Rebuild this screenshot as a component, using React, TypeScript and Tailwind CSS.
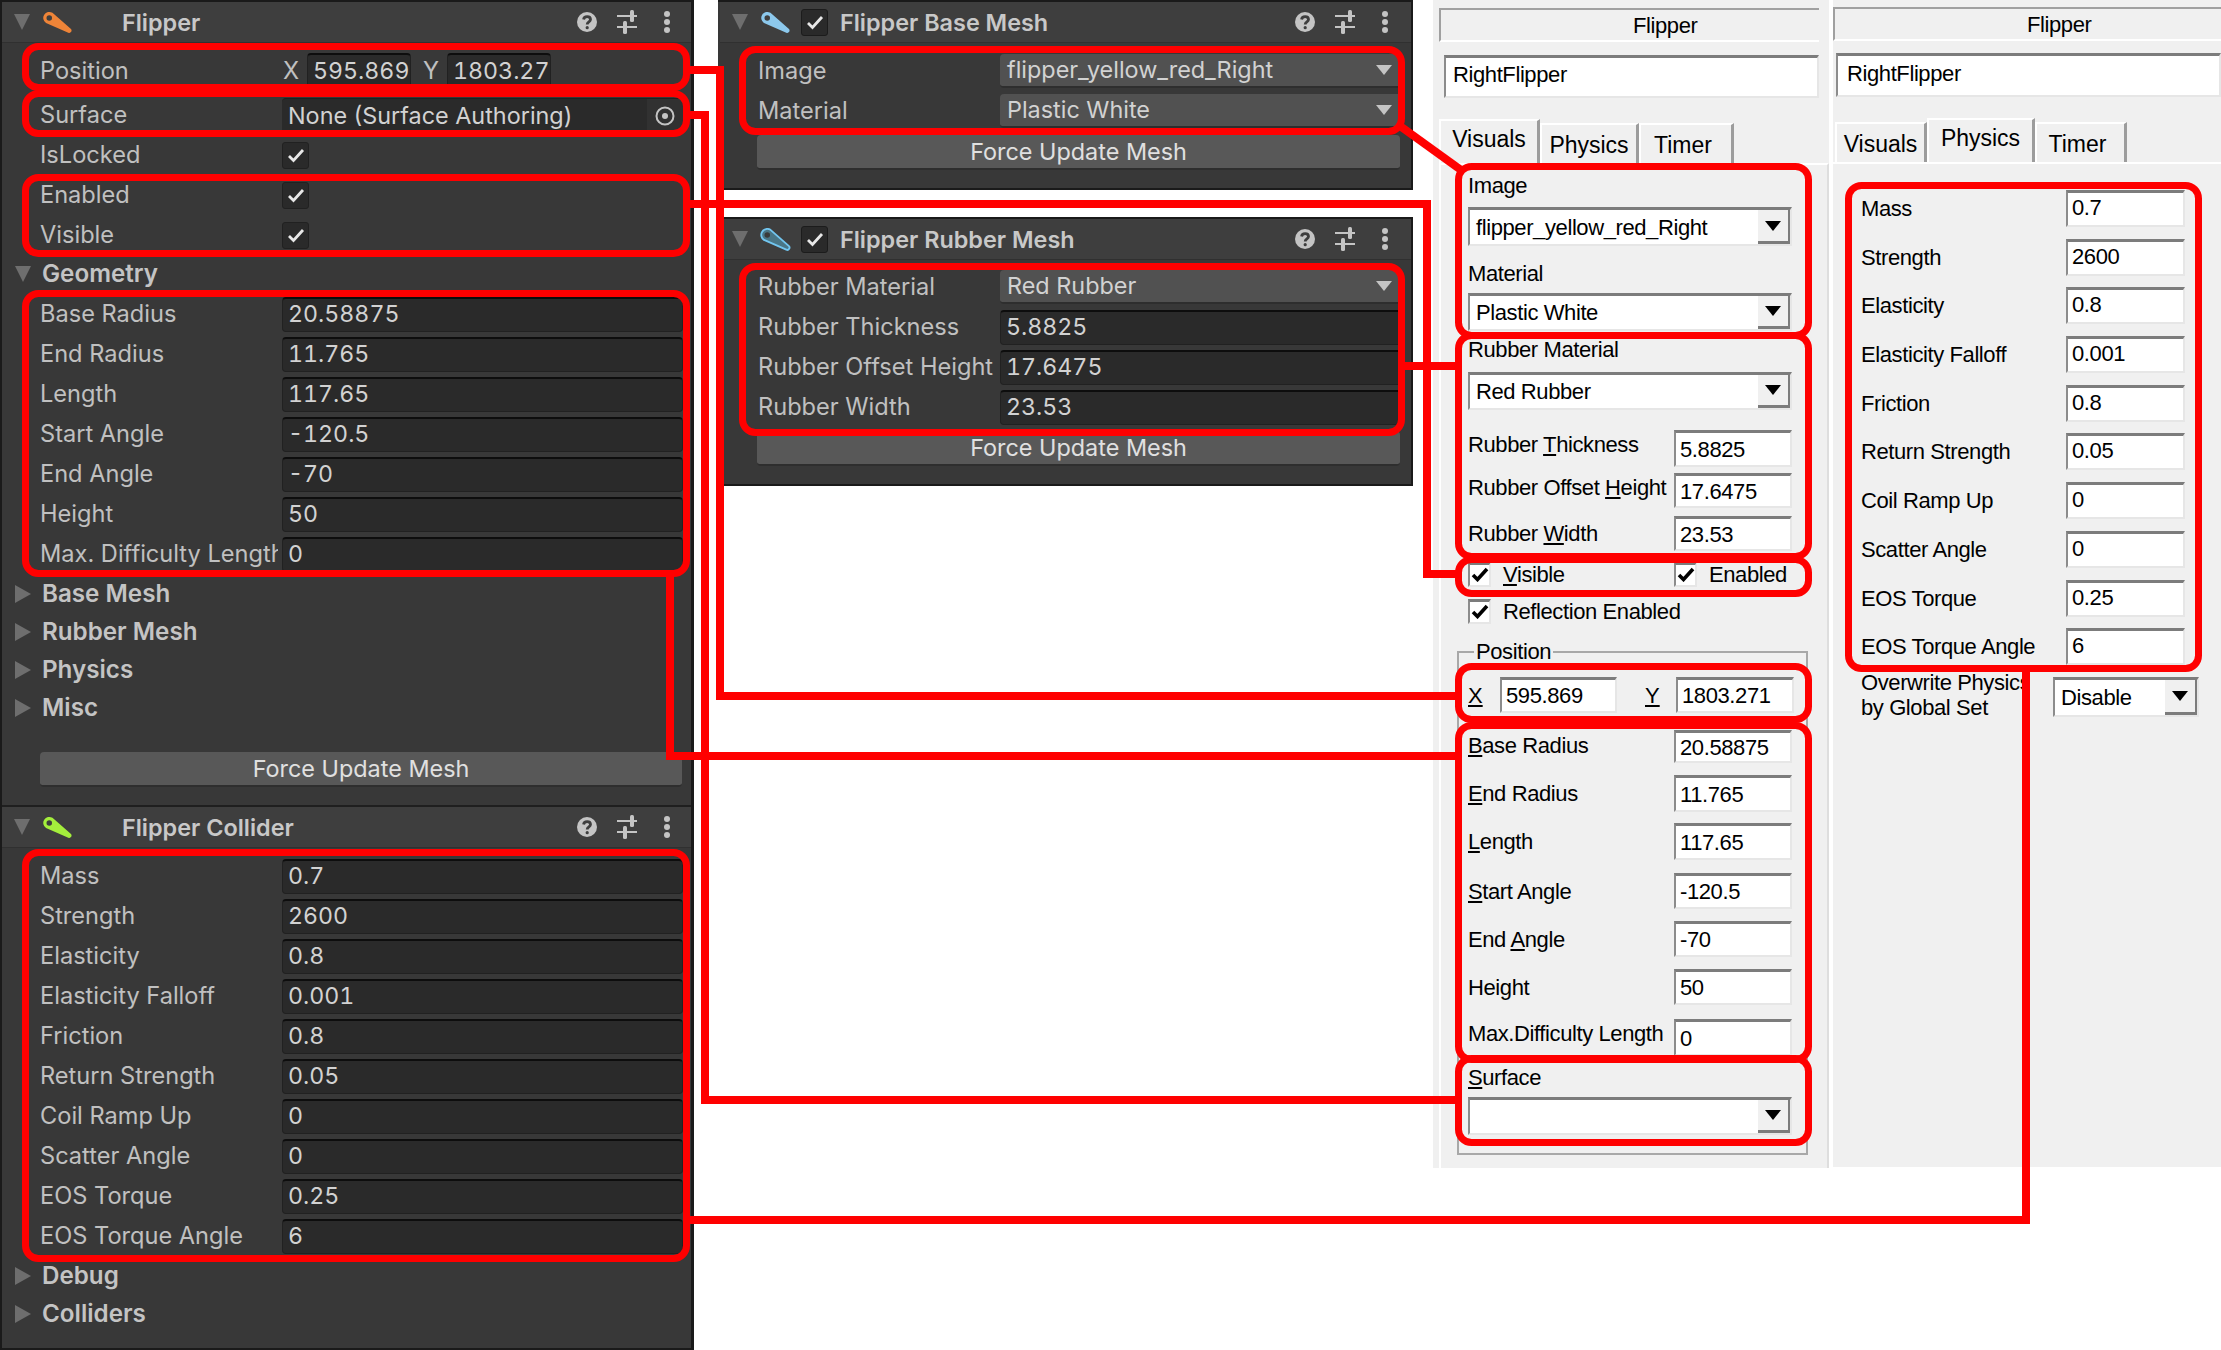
import React from 'react'

const RED_BOXES = [
  // unity inspector
  [22, 43, 690, 91], [22, 90, 690, 137], [22, 174, 690, 257], [22, 290, 690, 577], [22, 849, 690, 1262],
  [739, 46, 1405, 135], [739, 263, 1405, 436],
  // vpx editor
  [1455, 163, 1812, 339], [1455, 332, 1812, 560], [1455, 556, 1812, 597], [1455, 663, 1812, 723],
  [1455, 722, 1812, 1063], [1455, 1055, 1812, 1146], [1845, 182, 2202, 672],
]

const RED_LINES = [
  '690,70 720,70 720,696 1458,696',
  '690,115 705,115 705,1100 1458,1100',
  '690,204 1427,204 1427,574 1458,574',
  '670,577 670,756 1458,756',
  '690,1220 2026,1220 2026,670',
  '1405,366 1458,366',
  '1400,126 1461,170',
]

function Annotations() {
  return (
    <svg className="absolute inset-0 pointer-events-none" width={2221} height={1350} fill="none" stroke="#ff0000" strokeWidth={7}>
      {RED_LINES.map(p => <polyline key={p} points={p} strokeWidth={8} />)}
      {RED_BOXES.map(([x1, y1, x2, y2]) => (
        <rect key={`${x1}-${y1}`} x={x1 + 3.5} y={y1 + 3.5} width={x2 - x1 - 7} height={y2 - y1 - 7} rx={13} />
      ))}
    </svg>
  )
}

function FlipperIcon({ fill, stroke }: { fill: string; stroke?: string }) {
  return (
    <svg width={32} height={23} viewBox="-1 -1 34 25" className="shrink-0">
      <path
        d="M10 1 L29.8 18.4 A2.5 2.5 0 0 1 27.2 22.6 L3 12 A6.5 6.5 0 1 1 10 1 Z"
        fill={fill}
        stroke={stroke ?? 'none'}
        strokeWidth={stroke ? 2 : 0}
      />
      <circle cx={6.5} cy={6.5} r={3} fill={stroke ? '#3a3a3a' : '#3e3e3e'} />
    </svg>
  )
}

function HeaderIcons() {
  return (
    <div className="flex items-center">
      <svg width={20} height={20} viewBox="0 0 20 20">
        <circle cx={10} cy={10} r={10} fill="#c4c4c4" />
        <path d="M6.6 7.5 C7 3.6 13.5 3.6 13.5 7.6 C13.5 10 10.2 10 10.2 12.6" fill="none" stroke="#3e3e3e" strokeWidth={2.8} />
        <circle cx={10.2} cy={15.7} r={1.6} fill="#3e3e3e" />
      </svg>
      <svg width={20} height={24} viewBox="0 0 20 24" className="ml-[20px]" fill="#c4c4c4">
        <rect x={0} y={5} width={20} height={2} />
        <rect x={13} y={0} width={4} height={12} rx={1.5} />
        <rect x={0} y={16} width={20} height={2} />
        <rect x={6} y={11} width={4} height={13} rx={1.5} />
      </svg>
      <div className="ml-[27px] flex flex-col gap-[2px]">
        <span className="block w-[6px] h-[6px] rounded-full bg-[#c4c4c4]" />
        <span className="block w-[6px] h-[6px] rounded-full bg-[#c4c4c4]" />
        <span className="block w-[6px] h-[6px] rounded-full bg-[#c4c4c4]" />
      </div>
    </div>
  )
}

function Check({ className, heavy }: { className?: string; heavy?: boolean }) {
  return (
    <svg width={18} height={15} viewBox="0 0 18 15" className={className} fill="none" stroke="currentColor" strokeWidth={heavy ? 3.6 : 2.8}>
      <path d="M2 8 L6.5 12.5 L16 2" />
    </svg>
  )
}

function ComponentHeader({ title, icon, toggle }: { title: string; icon: React.ReactNode; toggle?: boolean }) {
  return (
    <div className="flex items-center h-[41px] pl-[12px] bg-[#3e3e3e] border-b border-[#303030]">
      <span className="w-0 h-0 border-x-[8px] border-x-transparent border-t-[16px] border-t-[#6e6e6e]" />
      <div className="ml-[12px] w-[31px] flex items-center">{icon}</div>
      <div className="ml-[10px] w-[27px]">
        {toggle && (
          <div className="w-[27px] h-[27px] rounded-[3px] bg-[#2a2a2a] border border-[#1c1c1c] flex items-center justify-center text-[#e8e8e8]">
            <Check />
          </div>
        )}
      </div>
      <div className="ml-[12px] pt-[1px] w-[455px] text-[23.4px] font-semibold text-[#c8c8c8]">{title}</div>
      <HeaderIcons />
    </div>
  )
}

function Row({ label, children }: { label: string; children?: React.ReactNode }) {
  return (
    <div className="flex items-center h-[40px] pl-[38px]">
      <div className="w-[238px] mr-[4px] shrink-0 overflow-hidden whitespace-nowrap text-[23.6px] text-[#c0c0c0]">{label}</div>
      <div className="flex-1 min-w-0 mr-[8px]">{children}</div>
    </div>
  )
}

function NumField({ value, className }: { value: string; className?: string }) {
  return (
    <div className={`h-[35px] rounded-[4px] bg-[#2a2a2a] border border-[#212121] border-t-2 border-t-[#0d0d0d] px-[5px] flex items-center text-[23.2px] tabular-nums text-[#d2d2d2] whitespace-nowrap ${className ?? ''}`}>
      {value}
    </div>
  )
}

function Toggle() {
  return (
    <div className="w-[27px] h-[27px] rounded-[3px] bg-[#2a2a2a] border border-[#212121] flex items-center justify-center text-[#e8e8e8]">
      <Check />
    </div>
  )
}

function Dropdown({ value }: { value: string }) {
  return (
    <div className="h-[34px] rounded-[4px] bg-[#515151] border-b-2 border-[#2e2e2e] pl-[7px] pr-[11px] flex items-center justify-between text-[23.4px] text-[#d2d2d2]">
      <span>{value}</span>
      <span className="w-0 h-0 border-x-[8px] border-x-transparent border-t-[10px] border-t-[#c4c4c4]" />
    </div>
  )
}

function Foldout({ label, open }: { label: string; open?: boolean }) {
  return (
    <div className="flex items-center h-[38px] pl-[13px] text-[24.2px] font-semibold text-[#c4c4c4]">
      {open ? (
        <span className="w-0 h-0 border-x-[8px] border-x-transparent border-t-[16px] border-t-[#6e6e6e]" />
      ) : (
        <span className="w-0 h-0 border-y-[9px] border-y-transparent border-l-[16px] border-l-[#6e6e6e]" />
      )}
      <span className="ml-[11px]">{label}</span>
    </div>
  )
}

function ForceButton({ className }: { className: string }) {
  return (
    <div className={`h-[35px] rounded-[4px] bg-[#585858] border-b-2 border-[#2e2e2e] flex items-center justify-center text-[23.4px] text-[#e0e0e0] ${className}`}>
      Force Update Mesh
    </div>
  )
}

const GEOMETRY = [
  ['Base Radius', '20.58875'], ['End Radius', '11.765'], ['Length', '117.65'], ['Start Angle', '-120.5'],
  ['End Angle', '-70'], ['Height', '50'], ['Max. Difficulty Length', '0'],
]

const COLLIDER = [
  ['Mass', '0.7'], ['Strength', '2600'], ['Elasticity', '0.8'], ['Elasticity Falloff', '0.001'], ['Friction', '0.8'],
  ['Return Strength', '0.05'], ['Coil Ramp Up', '0'], ['Scatter Angle', '0'], ['EOS Torque', '0.25'], ['EOS Torque Angle', '6'],
]

function Inspector() {
  return (
    <div className="w-[694px] h-[1350px] shrink-0 bg-[#383838] border-2 border-[#1a1a1a] border-r-[3px]">
      <ComponentHeader title="Flipper" icon={<FlipperIcon fill="#ee8438" />} />
      <div className="pt-[8px]">
        <Row label="Position">
          <div className="flex items-center text-[23.6px] text-[#c0c0c0]">
            <span className="w-[25px] pl-[1px]">X</span>
            <NumField value="595.869" className="w-[104px]" />
            <span className="w-[36px] pl-[12px]">Y</span>
            <NumField value="1803.27" className="w-[104px]" />
          </div>
        </Row>
        <div className="mt-[4px]">
          <Row label="Surface">
            <div className="h-[35px] rounded-[4px] bg-[#2a2a2a] border-t border-[#212121] pl-[6px] flex items-center text-[23.4px] text-[#d2d2d2]">
              <span className="flex-1 whitespace-nowrap">None (Surface Authoring)</span>
              <div className="w-[36px] h-full bg-[#313131] flex items-center justify-center">
                <svg width={20} height={20} viewBox="0 0 20 20" fill="none" stroke="#c4c4c4" strokeWidth={2}>
                  <circle cx={10} cy={10} r={8.5} />
                  <circle cx={10} cy={10} r={3} fill="#c4c4c4" stroke="none" />
                </svg>
              </div>
            </div>
          </Row>
        </div>
        <Row label="IsLocked"><Toggle /></Row>
        <Row label="Enabled"><Toggle /></Row>
        <Row label="Visible"><Toggle /></Row>
        <Foldout label="Geometry" open />
        <div className="mt-[1px]">
          {GEOMETRY.map(([l, v]) => <Row key={l} label={l}><NumField value={v} /></Row>)}
        </div>
        <div className="mt-[1px]">
          <Foldout label="Base Mesh" />
          <Foldout label="Rubber Mesh" />
          <Foldout label="Physics" />
          <Foldout label="Misc" />
        </div>
        <ForceButton className="mt-[25px] ml-[38px] mr-[9px]" />
      </div>
      <div className="mt-[18px] border-t-2 border-[#1f1f1f]">
        <ComponentHeader title="Flipper Collider" icon={<FlipperIcon fill="#a4ee3c" />} />
      </div>
      <div className="pt-[8px]">
        {COLLIDER.map(([l, v]) => <Row key={l} label={l}><NumField value={v} /></Row>)}
        <div className="mt-[1px]">
          <Foldout label="Debug" />
          <Foldout label="Colliders" />
        </div>
      </div>
    </div>
  )
}

function MeshPanels() {
  return (
    <div className="ml-[24px] w-[695px] shrink-0">
      <div className="h-[190px] bg-[#383838] border-2 border-[#1a1a1a] border-l-0 pl-[2px]">
        <ComponentHeader title="Flipper Base Mesh" icon={<FlipperIcon fill="#8cc8ec" />} toggle />
        <div className="pt-[8px]">
          <Row label="Image"><Dropdown value="flipper_yellow_red_Right" /></Row>
          <Row label="Material"><Dropdown value="Plastic White" /></Row>
        </div>
        <ForceButton className="mt-[4px] ml-[37px] mr-[11px]" />
      </div>
      <div className="mt-[27px] h-[269px] bg-[#383838] border-2 border-[#1a1a1a] border-l-0 pl-[2px]">
        <ComponentHeader title="Flipper Rubber Mesh" icon={<FlipperIcon fill="#4a7686" stroke="#72c6f0" />} toggle />
        <div className="pt-[7px]">
          <Row label="Rubber Material"><Dropdown value="Red Rubber" /></Row>
          <Row label="Rubber Thickness"><NumField value="5.8825" /></Row>
          <Row label="Rubber Offset Height"><NumField value="17.6475" /></Row>
          <Row label="Rubber Width"><NumField value="23.53" /></Row>
        </div>
        <ForceButton className="mt-[4px] ml-[37px] mr-[11px]" />
      </div>
    </div>
  )
}

const sunken = 'bg-white border-2 border-t-[3px] border-t-[#7c7c7c] border-l-[#8c8c8c] border-r-[#e6e6e6] border-b-[#e6e6e6]'
const winText = 'text-[22px] tracking-[-0.4px]'

function WinInput({ value, className }: { value: string; className: string }) {
  return <div className={`${sunken} pl-[4px] flex items-center overflow-hidden whitespace-nowrap ${winText} ${className}`}>{value}</div>
}

function WinCombo({ value, className }: { value?: string; className: string }) {
  return (
    <div className={`${sunken} pl-[6px] flex items-center justify-between ${winText} ${className}`}>
      <span>{value}</span>
      <div className="w-[32px] h-full bg-[#f0f0f0] border-r-2 border-b-[3px] border-[#7c7c7c] flex items-center justify-center">
        <span className="w-0 h-0 border-x-[8px] border-x-transparent border-t-[10px] border-t-black" />
      </div>
    </div>
  )
}

function WinField({ label, value, className, labelClass }: { label: React.ReactNode; value: string; className: string; labelClass?: string }) {
  return (
    <div className={`flex items-center ${className}`}>
      <div className={`w-[206px] shrink-0 whitespace-nowrap ${winText} ${labelClass ?? ''}`}>{label}</div>
      <WinInput value={value} className="w-[118px] h-full" />
    </div>
  )
}

function WinCheck({ label }: { label: React.ReactNode }) {
  return (
    <div className={`flex items-center ${winText}`}>
      <div className="w-[23px] h-[25px] bg-white border-2 border-t-[3px] border-t-[#7c7c7c] border-l-[#8c8c8c] border-r-[#e6e6e6] border-b-[#e6e6e6] flex items-center justify-center text-black">
        <Check heavy />
      </div>
      <span className="ml-[12px]">{label}</span>
    </div>
  )
}

function TitleBar({ className }: { className: string }) {
  return (
    <div className={`h-[34px] pl-[192px] border-t-2 border-l-2 border-[#a0a0a0] border-b-2 border-b-white flex items-center ${winText} ${className}`}>
      Flipper
    </div>
  )
}

function Tab({ label, active, className }: { label: string; active?: boolean; className: string }) {
  return (
    <div className={`border-t-2 border-t-white border-l-2 border-l-white border-r-[3px] border-r-[#9c9c9c] flex items-center justify-center text-[23px] ${active ? 'h-[44px] pb-[6px]' : 'h-[40px] pt-[2px]'} ${className}`}>
      {label}
    </div>
  )
}

function VisualsPanel() {
  return (
    <div className="w-[396px] shrink-0 h-[1168px] pl-[6px] bg-[#f0f0f0]">
      <TitleBar className="mt-[8px] w-[380px]" />
      <WinInput value="RightFlipper" className="mt-[13px] ml-[5px] w-[375px] h-[43px] pl-[7px] pb-[6px]" />
      <div className="mt-[22px] h-[43px] flex items-end">
        <Tab label="Visuals" active className="w-[101px]" />
        <Tab label="Physics" className="w-[99px]" />
        <Tab label="Timer" className="w-[95px] pr-[6px]" />
      </div>
      <div className="h-[1005px] border-t-2 border-l-2 border-white border-r-2 border-r-[#dedede] w-[390px] pl-[27px]">
        <div className={`pt-[6px] h-[35px] flex items-center ${winText}`}>Image</div>
        <WinCombo value="flipper_yellow_red_Right" className="mt-[7px] w-[324px] h-[39px]" />
        <div className={`mt-[12px] h-[30px] flex items-center ${winText}`}>Material</div>
        <WinCombo value="Plastic White" className="mt-[5px] w-[324px] h-[38px]" />
        <div className={`mt-[4px] h-[28px] flex items-center ${winText}`}>Rubber Material</div>
        <WinCombo value="Red Rubber" className="mt-[9px] w-[324px] h-[38px]" />
        <WinField label={<>Rubber <u>T</u>hickness</>} value="5.8825" className="mt-[20px] h-[37px]" labelClass="pb-[8px]" />
        <WinField label={<>Rubber Offset <u>H</u>eight</>} value="17.6475" className="mt-[6px] h-[35px]" labelClass="pb-[6px]" />
        <WinField label={<>Rubber <u>W</u>idth</>} value="23.53" className="mt-[8px] h-[35px]" />
        <div className="mt-[8px] h-[30px] flex items-center">
          <div className="w-[206px]"><WinCheck label={<><u>V</u>isible</>} /></div>
          <WinCheck label="Enabled" />
        </div>
        <div className="mt-[7px] h-[30px] flex items-center">
          <WinCheck label="Reflection Enabled" />
        </div>
        <div className="relative mt-[25px] -ml-[11px] w-[351px] h-[504px] border-2 border-[#a8a8a8] pl-[9px]">
          <span className={`absolute left-[15px] -top-[17px] h-[30px] px-[2px] flex items-center bg-[#f0f0f0] ${winText}`}>Position</span>
          <div className="pt-[24px] flex items-center h-[60px]">
            <span className="w-[32px] text-[22px]"><u>X</u></span>
            <WinInput value="595.869" className="w-[117px] h-[36px]" />
            <span className="w-[59px] pl-[28px] text-[22px]"><u>Y</u></span>
            <WinInput value="1803.271" className="w-[118px] h-[36px]" />
          </div>
          <WinField label={<><u>B</u>ase Radius</>} value="20.58875" className="mt-[17px] h-[33px]" labelClass="pb-[2px]" />
          <WinField label={<><u>E</u>nd Radius</>} value="11.765" className="mt-[12px] h-[37px]" />
          <WinField label={<><u>L</u>ength</>} value="117.65" className="mt-[11px] h-[37px]" />
          <WinField label={<><u>S</u>tart Angle</>} value="-120.5" className="mt-[13px] h-[36px]" />
          <WinField label={<>End <u>A</u>ngle</>} value="-70" className="mt-[12px] h-[36px]" />
          <WinField label="Height" value="50" className="mt-[12px] h-[36px]" />
          <WinField label="Max.Difficulty Length" value="0" className="mt-[14px] h-[37px]" labelClass="pb-[8px]" />
          <div className={`mt-[7px] h-[30px] flex items-center ${winText}`}><span className="pb-[2px]"><u>S</u>urface</span></div>
          <WinCombo className="mt-[4px] w-[324px] h-[38px]" />
        </div>
      </div>
    </div>
  )
}

function PhysicsPanel() {
  return (
    <div className="ml-[4px] flex-1 h-[1167px] bg-[#f0f0f0]">
      <TitleBar className="mt-[7px]" />
      <WinInput value="RightFlipper" className="mt-[12px] ml-[3px] h-[44px] pl-[9px] pb-[4px]" />
      <div className="mt-[21px] h-[44px] pl-[2px] flex items-end">
        <Tab label="Visuals" className="w-[92px]" />
        <Tab label="Physics" active className="w-[108px]" />
        <Tab label="Timer" className="w-[92px] pr-[6px]" />
      </div>
      <div className="border-t-2 border-white pt-[26px] pl-[28px]">
        <div className="flex flex-col gap-[11.7px]">
          {COLLIDER.map(([l, v]) => (
            <div key={l} className="flex items-center h-[37px]">
              <div className={`w-[205px] shrink-0 whitespace-nowrap ${winText}`}>{l}</div>
              <WinInput value={v} className="w-[119px] h-full pb-[3px]" />
            </div>
          ))}
        </div>
        <div className="mt-[12px] flex items-start">
          <div className="w-[192px] shrink-0 h-[50px] -mt-[7px]">
            <div className={`w-[164px] overflow-hidden whitespace-nowrap leading-[25px] ${winText}`}>Overwrite Physics</div>
            <div className={`whitespace-nowrap leading-[25px] ${winText}`}>by Global Set</div>
          </div>
          <WinCombo value="Disable" className="w-[146px] h-[40px]" />
        </div>
      </div>
    </div>
  )
}

export default function App() {
  return (
    <div className="relative w-[2221px] h-[1350px] bg-white overflow-hidden flex items-start font-['Inter',sans-serif]">
      <Inspector />
      <MeshPanels />
      <div className="ml-[20px] flex-1 flex items-start font-['Liberation_Sans',sans-serif] text-black">
        <VisualsPanel />
        <PhysicsPanel />
      </div>
      <Annotations />
    </div>
  )
}
